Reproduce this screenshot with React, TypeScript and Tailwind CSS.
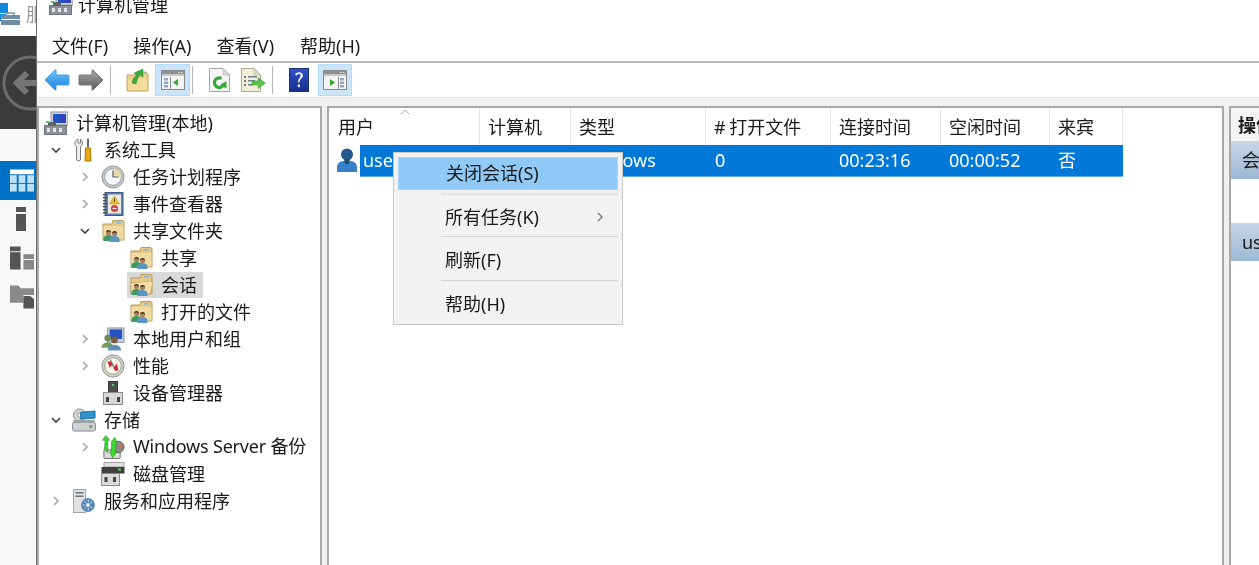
import { ReactNode } from "react";

type IconProps = { className?: string };

function BackArrow({ flip, gray }: { flip?: boolean; gray?: boolean }) {
  const top = gray ? "#a6a6a6" : "#6cc4f8";
  const bottom = gray ? "#5c5c5c" : "#1a80dc";
  const id = gray ? "arrGray" : "arrBlue";
  return (
    <svg width="26" height="24" viewBox="0 0 26 24" className={flip ? "-scale-x-100" : ""}>
      <defs>
        <linearGradient id={id} x1="0" y1="0" x2="0" y2="1">
          <stop offset="0" stopColor={top} />
          <stop offset="1" stopColor={bottom} />
        </linearGradient>
      </defs>
      <path d="M1 12 L11 2 L12 2 L12 7 L24 7 Q25 7 25 8 L25 16 Q25 17 24 17 L12 17 L12 22 L11 22 Z" fill={`url(#${id})`} stroke={gray ? "#777" : "#4a9fe0"} strokeWidth="1" />
    </svg>
  );
}

function FolderUp() {
  return (
    <svg width="23" height="24" viewBox="0 0 23 24">
      <path d="M1 7 L9 7 L11 4 L20 4 L22 6 L22 23 L1 23 Z" fill="#eccf88" stroke="#c9a860" />
      <path d="M2 12 L21 9 L21 22 L2 22 Z" fill="#f3dc9c" />
      <path d="M6 15 C7 10 9 8 11 7 L8 5 L17 1 L17 9 L14 7 C12 9 11 12 10 16 Z" fill="#3fa83a" stroke="#2d8a2a" strokeWidth="0.5" />
      <rect x="17" y="4" width="3" height="1.5" fill="#7fb7e0" />
    </svg>
  );
}

function PaneIcon({ right }: { right?: boolean }) {
  return (
    <svg width="24" height="20" viewBox="0 0 24 20">
      <rect x="0.5" y="0.5" width="23" height="19" fill="#f4f4f4" stroke="#8a8a8a" />
      <rect x="1" y="1" width="22" height="3" fill="#8f8f8f" />
      <rect x="17" y="2" width="1.5" height="1" fill="#e8e8e8" />
      <rect x="20" y="2" width="1.5" height="1" fill="#e8e8e8" />
      <rect x="1" y="4" width="22" height="2" fill="#c8c8c8" />
      {right ? (
        <>
          <path d="M7 9 L12 12.5 L7 16 Z" fill="#35a82f" />
          <rect x="15" y="7" width="1" height="12" fill="#8a8a8a" />
          <rect x="17" y="8" width="4" height="2.5" fill="#8fa7c4" />
          <rect x="17" y="11.5" width="4" height="2.5" fill="#8fa7c4" />
          <rect x="17" y="15" width="4" height="2.5" fill="#8fa7c4" />
        </>
      ) : (
        <>
          <rect x="3" y="8" width="4" height="2.5" fill="#8fa7c4" />
          <rect x="3" y="11.5" width="4" height="2.5" fill="#8fa7c4" />
          <rect x="3" y="15" width="4" height="2.5" fill="#8fa7c4" />
          <rect x="9" y="7" width="1" height="12" fill="#8a8a8a" />
          <path d="M17 9 L12 12.5 L17 16 Z" fill="#35a82f" />
        </>
      )}
    </svg>
  );
}

function RefreshDoc() {
  return (
    <svg width="21" height="24" viewBox="0 0 21 24">
      <path d="M0.5 0.5 L14 0.5 L20.5 7 L20.5 23.5 L0.5 23.5 Z" fill="#f6f6f6" stroke="#a5a5a5" />
      <path d="M14 0.5 L14 7 L20.5 7 Z" fill="#d8d8d8" stroke="#a5a5a5" strokeWidth="0.5" />
      <path d="M15 15 A4.8 4.8 0 1 1 12.5 10.5" fill="none" stroke="#35a83a" strokeWidth="3.2" />
      <path d="M11 17 L17.5 20.5 L17.5 13 Z" fill="#35a83a" />
    </svg>
  );
}

function ExportDoc() {
  return (
    <svg width="25" height="24" viewBox="0 0 25 24">
      <path d="M0.5 0.5 L13 0.5 L19.5 7 L19.5 23.5 L0.5 23.5 Z" fill="#f5edd6" stroke="#b0a890" />
      <path d="M13 0.5 L13 7 L19.5 7 Z" fill="#ddd6c0" stroke="#b0a890" strokeWidth="0.5" />
      <rect x="3" y="8" width="2" height="2" fill="#6d7d90" />
      <rect x="7" y="8" width="9" height="1.5" fill="#6d7d90" />
      <rect x="3" y="12" width="2" height="2" fill="#6d7d90" />
      <rect x="7" y="12" width="7" height="1.5" fill="#6d7d90" />
      <rect x="3" y="16" width="2" height="2" fill="#6d7d90" />
      <rect x="7" y="16" width="5" height="1.5" fill="#6d7d90" />
      <path d="M11 13 L17 13 L17 9.5 L24.5 15 L17 20.5 L17 17 L11 17 Z" fill="#5cc24a" stroke="#3e9e3a" strokeWidth="0.5" />
    </svg>
  );
}

function HelpBook() {
  return (
    <svg width="20" height="24" viewBox="0 0 20 24">
      <defs>
        <linearGradient id="helpFill" x1="0" y1="0" x2="0" y2="1">
          <stop offset="0" stopColor="#2f50c8" />
          <stop offset="1" stopColor="#17308a" />
        </linearGradient>
      </defs>
      <rect x="0.5" y="0.5" width="19" height="23" fill="url(#helpFill)" stroke="#1c2f7a" />
      <path d="M6 7 C6 3.5 14 3 14 7.5 C14 10.5 10.5 10.5 10.5 14.5 L9 14.5 C9 10 11.5 10 11.5 7.5 C11.5 5.5 8.5 5.5 8 7.5 Z" fill="#e8ecff" />
      <rect x="8.8" y="16.5" width="2.2" height="2.6" fill="#e8ecff" />
    </svg>
  );
}

function Computer({ className }: IconProps) {
  return (
    <svg width="24" height="24" viewBox="0 0 24 24" className={className}>
      <rect x="7" y="1" width="17" height="13" fill="#d0d6de" stroke="#8b929c" />
      <rect x="9" y="3" width="13" height="9" fill="#1f55c8" />
      <rect x="15" y="3" width="7" height="9" fill="#3a3fb0" opacity="0.7" />
      <rect x="0.5" y="14.5" width="22" height="9" fill="#8d9298" stroke="#70757b" />
      <rect x="4" y="11" width="8" height="4" fill="#5d6268" />
      <rect x="3" y="17" width="3" height="4" fill="#e4e4e4" />
      <rect x="9" y="17" width="3" height="4" fill="#e4e4e4" />
      <rect x="15" y="17" width="3" height="4" fill="#e4e4e4" />
      <rect x="2" y="10" width="3" height="2" fill="#4fc45a" />
    </svg>
  );
}

function Tools() {
  return (
    <svg width="24" height="24" viewBox="0 0 24 24">
      <path d="M6 1 C2 3 2 7 4.5 8.5 L4.5 22 Q6.5 24 8.5 22 L8.5 8.5 C11 7 11 3 8.5 1 L8.5 5 L6 5 Z" fill="#eeeeee" stroke="#7d7d7d" />
      <rect x="15" y="0.5" width="2" height="9" fill="#6b6b6b" />
      <path d="M13.5 10 L18.5 10 L19 23 L13 23 Z" fill="#e5a812" stroke="#a9780a" />
    </svg>
  );
}

function Clock() {
  return (
    <svg width="26" height="26" viewBox="0 0 26 26">
      <circle cx="13" cy="13" r="12" fill="#c4c8cc" stroke="#8e9296" />
      <circle cx="13" cy="13" r="9" fill="#f3f6fa" stroke="#9a9ea2" />
      <path d="M13 4 A9 9 0 0 1 22 13 L13 13 Z" fill="#efd9a5" />
      <path d="M13 6 L13 13 L19 13" fill="none" stroke="#55606c" strokeWidth="1.3" />
    </svg>
  );
}

function EventBook() {
  return (
    <svg width="22" height="24" viewBox="0 0 22 24">
      <rect x="3" y="0.5" width="18" height="23" fill="#5d80b5" stroke="#3c5b8c" />
      <rect x="6" y="2.5" width="13" height="19" fill="#ece9e0" />
      <path d="M12.5 4 L17.5 12 L7.5 12 Z" fill="#f0c020" stroke="#b78f10" strokeWidth="0.5" />
      <rect x="12" y="6.5" width="1" height="3.5" fill="#444" />
      <circle cx="12.5" cy="16.5" r="3.6" fill="#d94050" />
      <rect x="10.5" y="16" width="4" height="1" fill="#fff" />
      {[2, 5, 8, 11, 14, 17, 20].map((y) => (
        <rect key={y} x="1" y={y} width="4" height="1.4" fill="#4a4f57" />
      ))}
    </svg>
  );
}

function Person({ x, y, body }: { x: number; y: number; body: string }) {
  return (
    <>
      <path d={`M${x - 5} ${y + 11} L${x - 5} ${y + 8} Q${x - 4} ${y + 5} ${x} ${y + 5} Q${x + 4} ${y + 5} ${x + 5} ${y + 8} L${x + 5} ${y + 11} Z`} fill={body} />
      <circle cx={x} cy={y + 2.5} r="2.6" fill="#a8845c" />
      <path d={`M${x - 2.8} ${y + 2} Q${x} ${y - 2} ${x + 2.8} ${y + 2} Q${x} ${y + 0.8} ${x - 2.8} ${y + 2} Z`} fill="#3d2f22" />
    </>
  );
}

function SharedFolder({ open }: { open?: boolean }) {
  return (
    <svg width="23" height="24" viewBox="0 0 23 24">
      <path d="M1 5 L10 5 L11 1.5 L21 1.5 L22 3 L22 21 L1 21 Z" fill="#e7c988" stroke="#b9995a" />
      <rect x="14" y="3" width="5" height="1.6" fill="#86b8dc" />
      {open ? (
        <path d="M1 10 L20 8 L23 9 L20 21 L1 21 Z" fill="#f5dfa6" stroke="#c3a466" strokeWidth="0.7" />
      ) : (
        <rect x="1.5" y="7" width="20" height="13.5" fill="#f1dba2" />
      )}
      <Person x={6.5} y={11} body="#3f9a62" />
      <Person x={12.5} y={12} body="#5a96c4" />
    </svg>
  );
}

function UsersIcon() {
  return (
    <svg width="25" height="24" viewBox="0 0 25 24">
      <rect x="7" y="0.5" width="17" height="15" fill="#ccd3dc" stroke="#8b929c" />
      <rect x="9" y="2" width="13" height="10" fill="#2450c0" />
      <circle cx="7" cy="11" r="3.5" fill="#6d8a55" />
      <path d="M0.5 21 C0.5 14 13 14 13 21 Z" fill="#6f9d5c" />
      <circle cx="14" cy="13" r="3.5" fill="#7a5a3c" />
      <path d="M7 24 C7 16 21 16 21 24 Z" fill="#5f8fb5" />
    </svg>
  );
}

function Gauge() {
  return (
    <svg width="26" height="26" viewBox="0 0 26 26">
      <circle cx="13" cy="13" r="12" fill="#cfd2c8" stroke="#8e9289" />
      <circle cx="13" cy="13" r="9" fill="#f5f5ee" stroke="#9a9e92" />
      <path d="M7 8 L11 8 L14 15 L17 10 L19 18 L15 18 L12 12 L9.5 15 Z" fill="#d42c2c" />
      <path d="M10 6 L17 19" stroke="#444" strokeWidth="0.8" />
    </svg>
  );
}

function Device() {
  return (
    <svg width="20" height="24" viewBox="0 0 20 24">
      <rect x="5.5" y="0.5" width="9" height="12" fill="#4e4e4e" stroke="#333" />
      <rect x="9" y="3" width="2" height="2" fill="#50d060" />
      <rect x="0.5" y="11.5" width="19" height="12" fill="#d8d8d8" stroke="#8c8c8c" />
      <rect x="3" y="16" width="3" height="5" fill="#444" />
      <rect x="14" y="16" width="3" height="5" fill="#444" />
    </svg>
  );
}

function Storage() {
  return (
    <svg width="25" height="24" viewBox="0 0 25 24">
      <circle cx="8" cy="7" r="6.5" fill="#cfd3d0" stroke="#8e928f" />
      <circle cx="8" cy="7" r="2" fill="#fff" stroke="#8e928f" />
      <path d="M9 4 L24 2.5 L24 10 L9 11 Z" fill="#2c93cc" stroke="#1f6f9e" />
      <rect x="0.5" y="14.5" width="24" height="9" rx="2" fill="#cdd1d4" stroke="#85898c" />
      <rect x="1.5" y="12" width="22" height="3" fill="#9ea3a6" />
      <rect x="18" y="17.5" width="3" height="3" fill="#6fae5f" />
    </svg>
  );
}

function Backup() {
  return (
    <svg width="25" height="26" viewBox="0 0 25 26">
      <rect x="3" y="16" width="17" height="9" rx="1" fill="#dadada" stroke="#6d6d6d" />
      <circle cx="18" cy="13" r="6" fill="#8a8a8a" stroke="#606060" />
      <circle cx="21" cy="13" r="1.6" fill="#d07040" />
      <path d="M5 1 L9 6 L7 6 L7 19 L3.5 15 L4.5 6 L1.5 6 Z" fill="#3bd92f" stroke="#1f8d1a" strokeWidth="0.6" />
      <path d="M12 24 L9 18 L11 18 L11 7 L14.5 3 L16 7 L15 18 L17 18 Z" fill="#3bd92f" stroke="#1f8d1a" strokeWidth="0.6" />
    </svg>
  );
}

function Disk() {
  return (
    <svg width="24" height="24" viewBox="0 0 24 24">
      <path d="M3 0.5 L23 0.5 L23 5 L3 5 Z" fill="#e2e2e2" stroke="#a0a0a0" />
      <rect x="0.5" y="5" width="23" height="6.5" fill="#3f3f3f" />
      <rect x="17" y="6.5" width="3" height="2" fill="#50d060" />
      <rect x="0.5" y="11.5" width="18" height="12" fill="#d9d9d9" stroke="#8c8c8c" />
      <rect x="3.5" y="15" width="3" height="5" fill="#444" />
      <rect x="12" y="15" width="3" height="5" fill="#444" />
    </svg>
  );
}

function Services() {
  return (
    <svg width="22" height="24" viewBox="0 0 22 24">
      <rect x="0.5" y="0.5" width="12" height="23" fill="#dfe3e6" stroke="#a2a7ab" />
      <rect x="2.5" y="3" width="8" height="1.5" fill="#6d7378" />
      <rect x="2.5" y="6.5" width="8" height="1.5" fill="#6d7378" />
      <circle cx="15" cy="16" r="6" fill="none" stroke="#5f91c0" strokeWidth="2" />
      <circle cx="15" cy="16" r="4" fill="#8fb5d8" stroke="#4f80b0" strokeWidth="3" strokeDasharray="2 1.2" />
      <circle cx="15" cy="16" r="1.5" fill="#f2f6fa" />
    </svg>
  );
}

function UserSession() {
  return (
    <svg width="20" height="24" viewBox="0 0 20 24">
      <path d="M0 24 L0 18 Q1.5 13 7 13 L13 13 Q18.5 13 20 18 L20 24 Z" fill="#3a7fca" />
      <circle cx="10" cy="6.5" r="6" fill="#245a90" />
      <path d="M7 11 L13 11 L12 16 L8 16 Z" fill="#1e4a78" />
    </svg>
  );
}

function Chevron({ open }: { open?: boolean }) {
  return (
    <svg width="12" height="12" viewBox="0 0 12 12">
      {open ? (
        <path d="M2 4 L6 8 L10 4" fill="none" stroke="#404040" strokeWidth="1.6" />
      ) : (
        <path d="M4 2 L8 6 L4 10" fill="none" stroke="#a6a6a6" strokeWidth="1.6" />
      )}
    </svg>
  );
}

const indents = ["w-[7px]", "w-[35px] pr-[12px]", "w-[64px] pr-[12px]", "w-[92px] pr-[12px]"];

function TreeRow({ depth, icon, label, expander, selected, labelClass }: { depth: number; icon: ReactNode; label: string; expander?: "open" | "closed"; selected?: boolean; labelClass?: string }) {
  return (
    <div className="flex h-[27px] items-center whitespace-nowrap">
      <div className={`flex shrink-0 justify-end ${indents[depth]}`}>
        {expander && <Chevron open={expander === "open"} />}
      </div>
      <div className={`flex h-[26px] items-center ${selected ? "-ml-[4px] bg-[#d9d9d9] pl-[4px] pr-[6px]" : ""}`}>
        <div className="-ml-[2px] flex w-[24px] shrink-0 items-center justify-center">{icon}</div>
        <span className={`ml-[8px] ${labelClass ?? ""}`}>{label}</span>
      </div>
    </div>
  );
}

function ToolButton({ children, active, wide }: { children: ReactNode; active?: boolean; wide?: boolean }) {
  return (
    <div className={`flex h-[32px] items-center justify-center ${wide ? "w-[35px]" : "w-[34px]"} ${active ? "border border-[#b5daf7] bg-[#cce4f7]" : ""}`}>
      {children}
    </div>
  );
}

function Sep() {
  return <div className="ml-[2px] mr-[9px] h-[28px] w-px bg-[#b8b8b8]" />;
}

const columns = [
  { label: "用户", width: "w-[150px]" },
  { label: "计算机", width: "w-[91px]" },
  { label: "类型", width: "w-[135px]" },
  { label: "# 打开文件", width: "w-[125px] [word-spacing:-1px]" },
  { label: "连接时间", width: "w-[110px]" },
  { label: "空闲时间", width: "w-[109px]" },
  { label: "来宾", width: "w-[74px] border-r" },
];

function MenuItem({ label, arrow, active }: { label: string; arrow?: boolean; active?: boolean }) {
  return (
    <div className={`flex h-[33px] items-center justify-between pb-[2px] pl-[47px] pr-[14px] ${active ? "border border-[#a8d4f8] bg-[#91c9f7]" : ""}`}>
      <span>{label}</span>
      {arrow && (
        <svg width="8" height="10" viewBox="0 0 8 10">
          <path d="M2 1 L6 5 L2 9" fill="none" stroke="#707070" strokeWidth="1.2" />
        </svg>
      )}
    </div>
  );
}

export default function App() {
  return (
    <div className="flex h-[565px] w-[1259px] overflow-hidden bg-white font-['Noto_Sans','Noto_Sans_CJK_SC',sans-serif] text-[18px] leading-[26px] text-[#1a1a1a] blur-[0.35px]">
      {/* background app strip on the left */}
      <div className="flex w-[37px] shrink-0 flex-col overflow-hidden border-r border-[#6e6e6e] bg-[#f8f8f8]">
        <div className="relative h-[36px] shrink-0 bg-white">
          <div className="absolute left-0 top-[3px] h-[10px] w-[8px] bg-[#0f8ae0]" />
          <div className="absolute left-0 top-[14px] h-[7px] w-[6px] bg-[#0f8ae0]" />
          <svg className="absolute left-0 top-[12px]" width="20" height="13" viewBox="0 0 20 13">
            <path d="M6 3 L6 1 L14 1 L14 3" fill="none" stroke="#6f8ea5" strokeWidth="1.4" />
            <rect x="1" y="3" width="19" height="10" fill="#6f8ea5" />
            <rect x="1" y="7" width="19" height="1" fill="#fff" />
          </svg>
          <span className="absolute left-[26px] top-[1px] text-[#9a9a9a]">服</span>
        </div>
        <div className="h-[93px] shrink-0 bg-[#3b3b3b]">
          <svg width="36" height="93" viewBox="0 0 36 93">
            <circle cx="30" cy="47" r="26" fill="none" stroke="#6c6c6c" strokeWidth="3" />
            <path d="M36 47 L18 47 M27 37 L17 47 L27 57" fill="none" stroke="#767676" strokeWidth="6" />
          </svg>
        </div>
        <div className="mt-[32px] flex h-[39px] shrink-0 items-center justify-end bg-[#0072c6] pr-[2px]">
          <svg width="24" height="24" viewBox="0 0 25 24">
            <rect width="25" height="5" fill="#ffffff" />
            <rect y="6" width="7" height="8" fill="#bfe0f5" />
            <rect x="9" y="6" width="7" height="8" fill="#bfe0f5" />
            <rect x="18" y="6" width="7" height="8" fill="#bfe0f5" />
            <rect y="15" width="7" height="8" fill="#bfe0f5" />
            <rect x="9" y="15" width="7" height="8" fill="#bfe0f5" />
            <rect x="18" y="15" width="7" height="8" fill="#bfe0f5" />
          </svg>
        </div>
        <div className="ml-[16px] mt-[7px] h-[5px] w-[10px] shrink-0 bg-[#555]" />
        <div className="ml-[16px] mt-[2px] h-[17px] w-[10px] shrink-0 bg-[#555]" />
        <svg className="ml-[10px] mt-[15px] shrink-0" width="24" height="24" viewBox="0 0 25 24">
          <rect width="11" height="5" fill="#555" />
          <rect y="6" width="11" height="18" fill="#555" />
          <rect x="14" y="8" width="11" height="5" fill="#888" />
          <rect x="14" y="14" width="11" height="10" fill="#888" />
        </svg>
        <svg className="ml-[10px] mt-[15px] shrink-0" width="24" height="24" viewBox="0 0 25 24">
          <path d="M0 0 L9 0 L11 3 L25 3 L25 10 L14 10 L14 18 L0 18 Z" fill="#8a8a8a" />
          <path d="M14 11 L21 11 L25 14 L25 24 L14 24 Z" fill="#555" />
        </svg>
      </div>

      {/* main window */}
      <div className="flex min-w-0 flex-1 flex-col">
        <div className="flex h-[30px] shrink-0 items-start overflow-hidden pl-[12px]">
          <div className="-mt-[9px]">
            <Computer />
          </div>
          <span className="ml-[5px] -mt-[8px]">计算机管理</span>
        </div>

        <div className="flex h-[31px] shrink-0 items-center gap-[25px] pl-[15px]">
          <span>文件(F)</span>
          <span>操作(A)</span>
          <span>查看(V)</span>
          <span className="ml-[1px]">帮助(H)</span>
        </div>

        <div className="flex h-[36px] shrink-0 items-center border-t-2 border-[#b9b9b9] bg-white pl-[3px]">
          <ToolButton><BackArrow /></ToolButton>
          <ToolButton><BackArrow flip gray /></ToolButton>
          <Sep />
          <ToolButton><FolderUp /></ToolButton>
          <div className="ml-px">
            <ToolButton active wide><PaneIcon /></ToolButton>
          </div>
          <Sep />
          <ToolButton><RefreshDoc /></ToolButton>
          <ToolButton><ExportDoc /></ToolButton>
          <Sep />
          <ToolButton><HelpBook /></ToolButton>
          <div className="ml-[2px]">
            <ToolButton active><PaneIcon right /></ToolButton>
          </div>
        </div>

        <div className="flex min-h-0 flex-1 gap-[5px] border-t border-[#e3e3e3] bg-[#f0f0f0] pt-[8px]">
          {/* tree */}
          <div className="h-[470px] w-[285px] shrink-0 border-2 border-[#a8a8a8] bg-white pt-[1px]">
            <TreeRow depth={0} icon={<Computer />} label="计算机管理(本地)" />
            <TreeRow depth={1} expander="open" icon={<Tools />} label="系统工具" />
            <TreeRow depth={2} expander="closed" icon={<Clock />} label="任务计划程序" />
            <TreeRow depth={2} expander="closed" icon={<EventBook />} label="事件查看器" />
            <TreeRow depth={2} expander="open" icon={<SharedFolder />} label="共享文件夹" />
            <TreeRow depth={3} icon={<SharedFolder />} label="共享" />
            <TreeRow depth={3} selected icon={<SharedFolder open />} label="会话" />
            <TreeRow depth={3} icon={<SharedFolder />} label="打开的文件" />
            <TreeRow depth={2} expander="closed" icon={<UsersIcon />} label="本地用户和组" />
            <TreeRow depth={2} expander="closed" icon={<Gauge />} label="性能" />
            <TreeRow depth={2} icon={<Device />} label="设备管理器" />
            <TreeRow depth={1} expander="open" icon={<Storage />} label="存储" />
            <TreeRow depth={2} expander="closed" icon={<Backup />} label="Windows Server 备份" labelClass="-mt-[2px] tracking-[-0.2px]" />
            <TreeRow depth={2} icon={<Disk />} label="磁盘管理" />
            <TreeRow depth={1} expander="closed" icon={<Services />} label="服务和应用程序" />
          </div>

          {/* session list */}
          <div className="relative h-[470px] w-[897px] shrink-0 border-2 border-[#a8a8a8] bg-white">
            <div className="flex h-[37px] items-center">
              {columns.map((col) => (
                <div key={col.label} className={`flex h-full items-center border-l border-[#e5e5e5] pl-[8px] first:border-l-0 first:pl-[9px] ${col.width}`}>
                  {col.label}
                </div>
              ))}
            </div>
            <svg className="absolute left-[71px] top-[1px]" width="10" height="6" viewBox="0 0 10 6">
              <path d="M1 5 L5 1 L9 5" fill="none" stroke="#a8a8a8" />
            </svg>
            <div className="flex h-[32px]">
              <div className="flex w-[31px] shrink-0 items-start pl-[8px] pt-[3px]">
                <UserSession />
              </div>
              <div className="flex h-full w-[763px] shrink-0 items-center border-b border-[#5aa9e8] bg-[#0078d7] pb-[2px] text-white">
                <div className="w-[119px] pl-[3px]">user</div>
                <div className="w-[91px]" />
                <div className="w-[135px] pl-[9px]">Windows</div>
                <div className="w-[125px] pl-[10px]">0</div>
                <div className="w-[110px] pl-[9px]">00:23:16</div>
                <div className="w-[109px] pl-[9px]">00:00:52</div>
                <div className="w-[74px] pl-[9px]">否</div>
              </div>
            </div>

            {/* context menu */}
            <div className="absolute left-[64px] top-[44px] w-[230px] border border-[#c9c9c9] bg-[#f2f2f2] px-[4px] pb-[3px] pt-[4px]">
              <MenuItem label="关闭会话(S)" active />
              <div className="ml-[43px] mt-[3px] h-[2px] bg-[#e3e3e3]" />
              <div className="mt-[6px]"><MenuItem label="所有任务(K)" arrow /></div>
              <div className="ml-[43px] mt-[2px] h-px bg-[#d4d4d4]" />
              <div className="mt-[7px]"><MenuItem label="刷新(F)" /></div>
              <div className="ml-[43px] mt-[3px] h-px bg-[#d4d4d4]" />
              <div className="mt-[7px]"><MenuItem label="帮助(H)" /></div>
            </div>
          </div>

          {/* actions pane */}
          <div className="h-[470px] flex-1 overflow-hidden border-2 border-r-0 border-[#a8a8a8] bg-white whitespace-nowrap">
            <div className="flex h-[33px] items-center bg-[#f4f4f4] pl-[7px] font-bold">操作</div>
            <div className="flex h-[38px] items-center bg-gradient-to-b from-[#c6d6e8] to-[#9db8d3] pl-[11px]">会话</div>
            <div className="h-[44px]" />
            <div className="flex h-[38px] items-center bg-gradient-to-b from-[#c6d6e8] to-[#9db8d3] pl-[11px]">user</div>
          </div>
        </div>
      </div>
    </div>
  );
}
